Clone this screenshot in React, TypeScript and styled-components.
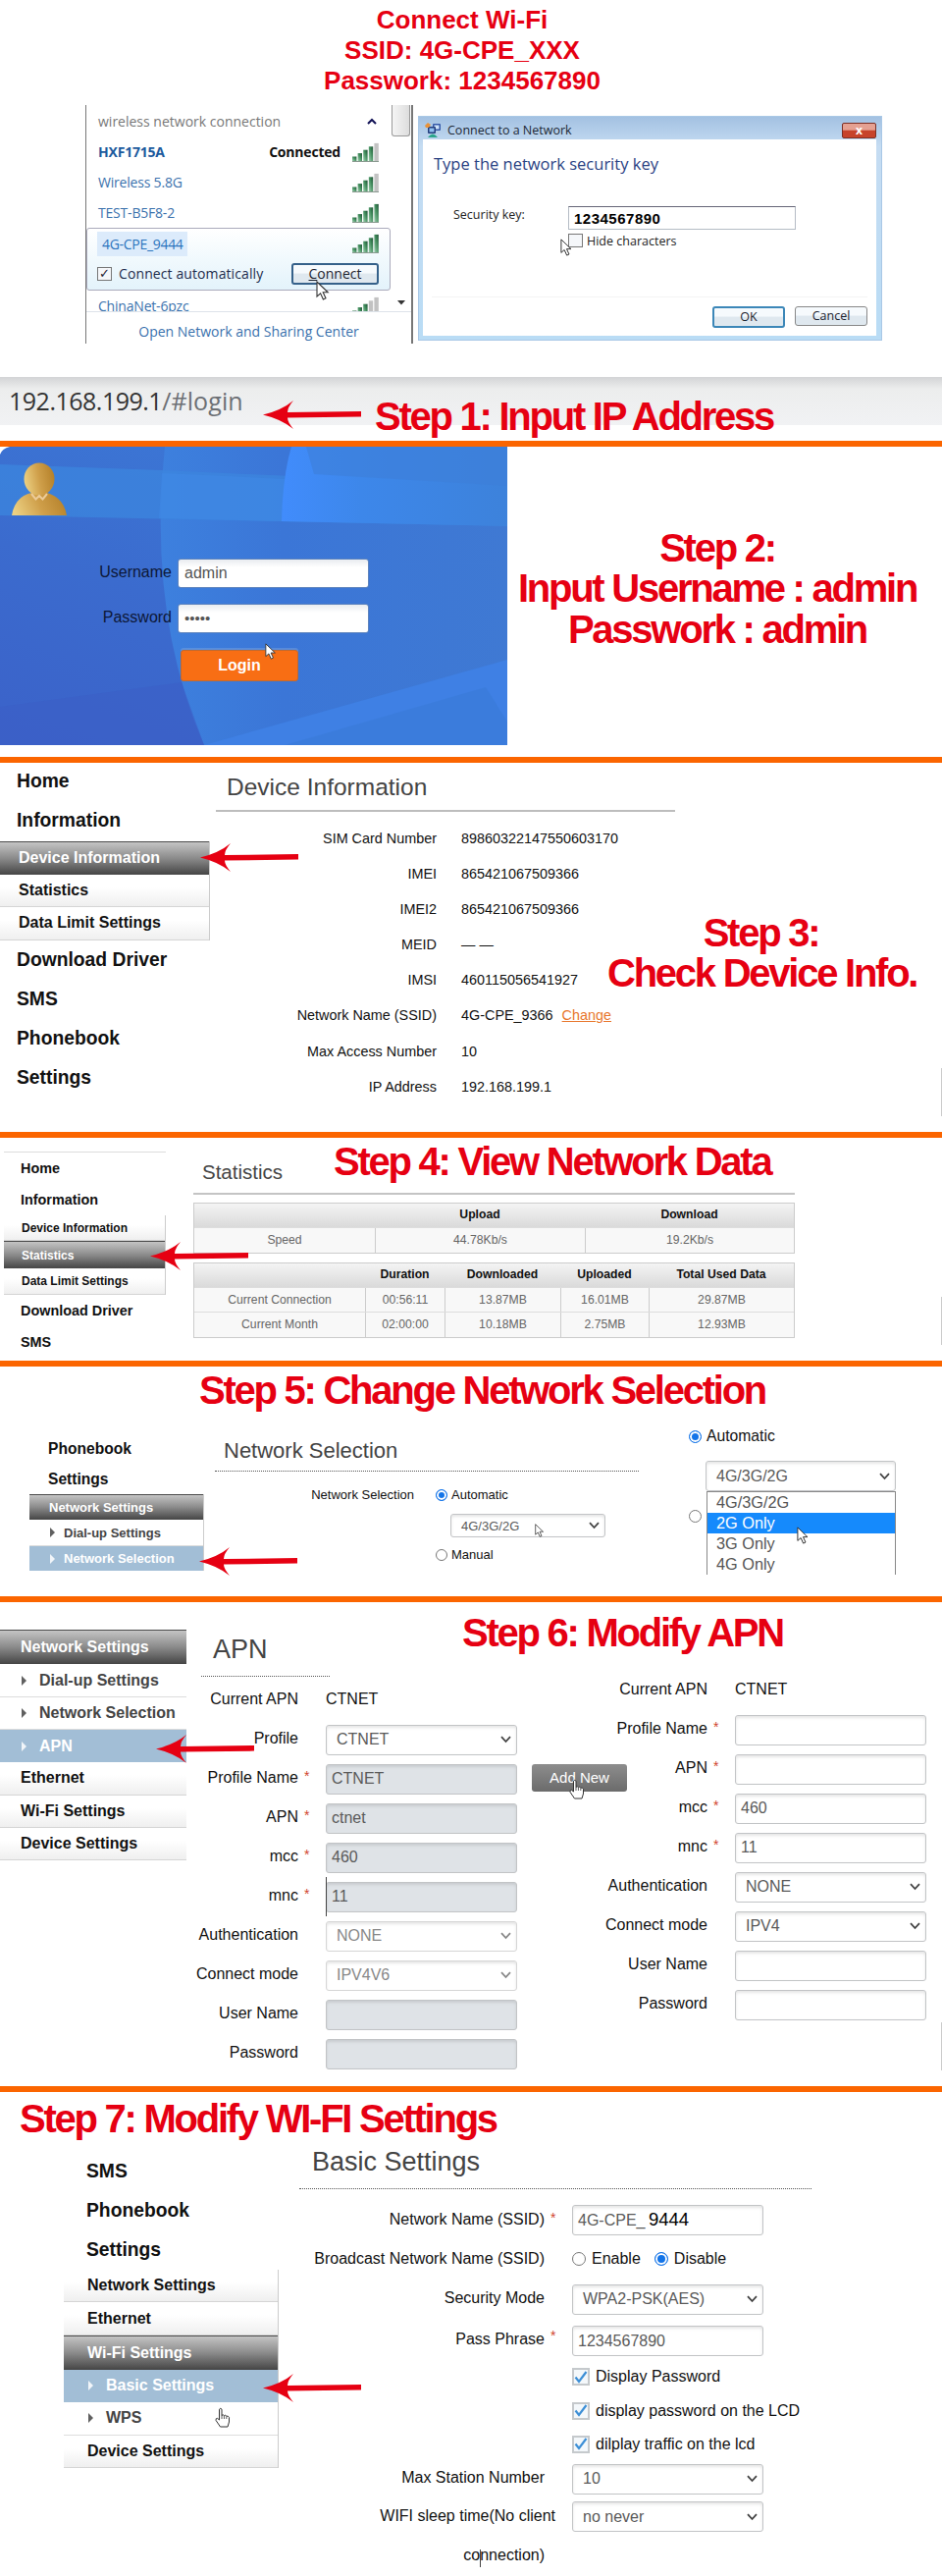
import React from 'react';
import styled, { createGlobalStyle, css } from 'styled-components';

const ORANGE = '#fb6500';
const RED = '#e60012';

const GlobalStyle = createGlobalStyle`
    * {
        box-sizing: border-box;
    }

    body {
        margin: 0;
        background: #fff;
        font-family: 'Liberation Sans', Arial, sans-serif;
        color: #111;
    }
`;

/* ---------- page scaffolding ---------- */

const Page = styled.main`
    width: 960px;
    height: 2624px;
    overflow: hidden;
`;

const Section = styled.section<{ $height: number; $last?: boolean }>`
    position: relative;
    height: ${props => props.$height}px;
    border-bottom: ${props => (props.$last ? 'none' : `6px solid ${ORANGE}`)};
`;

const Columns = styled.div`
    display: flex;
    align-items: flex-start;
`;

const StepTitle = styled.h2<{ $left?: number; $top?: number; $width?: number }>`
    margin: ${props => props.$top || 0}px 0 0 ${props => props.$left || 0}px;
    width: ${props => (props.$width ? `${props.$width}px` : 'auto')};
    flex-shrink: 0;
    font-size: 40px;
    line-height: ${props => (props.$width ? 41.4 : 48)}px;
    letter-spacing: -2.25px;
    text-align: ${props => (props.$width ? 'center' : 'left')};
    white-space: nowrap;
    color: ${RED};
`;

const Overlay = styled.div<{ $x: number; $y: number }>`
    position: absolute;
    left: ${props => props.$x}px;
    top: ${props => props.$y}px;
    z-index: 2;
    line-height: 0;
`;

const EdgeMark = styled.div<{ $y: number }>`
    position: absolute;
    right: 0;
    top: ${props => props.$y}px;
    width: 1px;
    height: 49px;
    background: #ccc;
`;

const TextCaret = styled.div<{ $h: number }>`
    width: 1px;
    height: ${props => props.$h}px;
    background: #444;
`;

/* ---------- drawings ---------- */

const Arrow = () => (
    <svg width="100" height="29" viewBox="0 0 100 29">
        <path
            d="M0 14.5 Q19 10 31 0 Q25 7 25 12 L100 11 V16.6 L25 17.6 Q25 22 31 29 Q19 19 0 14.5Z"
            fill={RED}
        />
    </svg>
);

const Pointer = ({ size = 18 }: { size?: number }) => (
    <svg width={size * 0.7} height={size} viewBox="0 0 14 20">
        <path
            d="M1 1 V16 L4.6 12.8 L7.4 19 L10 17.8 L7.2 11.8 H12.2 Z"
            fill="#fff"
            stroke="#333"
            strokeWidth="1.1"
        />
    </svg>
);

const Hand = () => (
    <svg width="16" height="21" viewBox="0 0 16 21">
        <path
            d="M4.5 13 V2.2 Q5.7 .4 7 2.2 V8.3 Q8.3 7.2 9.4 8.6 Q10.8 7.6 11.8 9.2 Q13.5 8.6 14.5 10.4 V15 L13 20 H5.5 L1 13.4 Q.8 11 2.6 11.4 Z"
            fill="#fff"
            stroke="#333"
        />
        <path d="M7 8 V12 M9.4 9 V12 M11.8 9.6 V12" stroke="#333" strokeWidth=".8" />
    </svg>
);

const Chevron = ({ faded }: { faded?: boolean }) => (
    <svg width="11" height="8" viewBox="0 0 11 8">
        <path d="M1 1.2 L5.5 6 L10 1.2" fill="none" stroke={faded ? '#888' : '#444'} strokeWidth="1.8" />
    </svg>
);

const Signal = ({ level }: { level: number }) => (
    <svg width="27" height="20" viewBox="0 0 27 20">
        <defs>
            <linearGradient id="bar" x1="0" y1="1" x2="1" y2="0">
                <stop offset="0" stopColor="#9fd0b0" />
                <stop offset="0.6" stopColor="#3f8a5a" />
                <stop offset="1" stopColor="#1d4d33" />
            </linearGradient>
        </defs>
        {[0, 1, 2, 3, 4].map(i => (
            <rect
                key={i}
                x={i * 5.6}
                y={14.5 - i * 3.4}
                width="4.4"
                height={4.5 + i * 3.4}
                fill={i < level ? 'url(#bar)' : '#c2c2c2'}
            />
        ))}
        <path d="M0 19.5 H27" stroke="#8a9a90" strokeWidth="1" />
    </svg>
);

const Avatar = () => (
    <svg width="56" height="54" viewBox="0 0 56 54">
        <defs>
            <linearGradient id="gold" x1="0" y1="0.6" x2="1" y2="0.4">
                <stop offset="0" stopColor="#ecd183" />
                <stop offset="0.5" stopColor="#cf9f4a" />
                <stop offset="1" stopColor="#b5812a" />
            </linearGradient>
        </defs>
        <path d="M0 54 Q3 35 20 31 H36 Q53 36 56 54 Z" fill="url(#gold)" />
        <ellipse cx="28" cy="17" rx="15.5" ry="16.5" fill="url(#gold)" />
        <path d="M20 32 L24.5 37.5 L28 34 L31.5 37.5 L36 32" fill="none" stroke="#eccb98" strokeWidth="2" />
    </svg>
);

const LoginBackdrop = () => (
    <svg width="517" height="304" viewBox="0 0 517 304">
        <defs>
            <linearGradient id="sky" x1="0" y1="1" x2="0.6" y2="0">
                <stop offset="0" stopColor="#3b62c9" />
                <stop offset="0.5" stopColor="#3b6bce" />
                <stop offset="1" stopColor="#3c78d6" />
            </linearGradient>
            <linearGradient id="beam" x1="0" y1="0" x2="1" y2="0">
                <stop offset="0" stopColor="#418cfc" />
                <stop offset="0.35" stopColor="#3d87ea" />
                <stop offset="1" stopColor="#3d82db" />
            </linearGradient>
            <linearGradient id="sweep" x1="0" y1="0" x2="1" y2="0">
                <stop offset="0" stopColor="#3d80de" />
                <stop offset="0.35" stopColor="#3b76d7" />
                <stop offset="1" stopColor="#3f79d3" />
            </linearGradient>
        </defs>
        <rect width="517" height="304" fill="url(#sky)" />
        <path d="M168 0 Q150 170 208 304 H517 V0Z" fill="url(#sweep)" />
        <path d="M0 18 L165 24 L517 40 V81 L0 70Z" fill="#3c86de" opacity="0.75" />
        <path d="M165 27 L290 33 L287 76 L162 73Z" fill="#3f88e6" opacity="0.6" />
        <path d="M297 0 H517 V81 L287 76 Q288 30 297 0Z" fill="url(#beam)" />
        <path d="M320 28 L517 40 V0 H312Z" fill="#3e7fd8" opacity="0.6" />
        <path d="M208 304 L517 217 V304Z" fill="#3f80e4" />
        <path d="M290 304 L495 245 L517 280 V304Z" fill="#3b7ad8" opacity="0.7" />
        <path d="M0 265 L185 240 L208 304 H0Z" fill="#3b5ec6" opacity="0.5" />
        <path d="M0 0 H10 Q2 2 0 8Z" fill="#fff" />
    </svg>
);

/* ---------- Windows network flyout ---------- */

const Intro = styled.header`
    height: 384px;
    padding-top: 5px;
`;

const IntroTitle = styled.h1`
    width: 942px;
    margin: 0 0 9px;
    font-size: 26px;
    line-height: 31px;
    text-align: center;
    color: ${RED};
`;

const Flyout = styled.div`
    display: flex;
    flex-wrap: wrap;
    width: 334px;
    height: 243px;
    margin-left: 87px;
    border-left: 1px solid #777;
    border-right: 2px solid #777;
    font-family: 'Open Sans', sans-serif;
    font-size: 14px;
    color: #3b72ad;
`;

const NetworkList = styled.div`
    width: 310px;
    height: 210px;
    overflow: hidden;
`;

const NetworkRow = styled.div<{ $bold?: boolean }>`
    display: flex;
    align-items: center;
    justify-content: space-between;
    height: 31px;
    padding: 0 12px;
    font-weight: ${props => (props.$bold ? 700 : 400)};
    letter-spacing: -0.2px;
    color: ${props => (props.$bold ? '#1c5a9d' : '#3b72ad')};
    white-space: nowrap;
`;

const ListHeader = styled(NetworkRow)`
    height: 32px;
    padding-right: 14px;
    color: #777;
    letter-spacing: 0;
`;

const Connected = styled.span`
    margin: 0 12px 0 auto;
    color: #111;
`;

const SelectedNetwork = styled.div`
    height: 64px;
    border: 1px solid #aab;
    border-radius: 3px;
    background: linear-gradient(#fff, #e3f3fb);
    color: #1d2d4d;
`;

const SelectedRow = styled.div`
    display: flex;
    align-items: center;
    justify-content: space-between;
    height: 30.5px;
    padding: 0 11px 0 10px;
`;

const Highlight = styled.span`
    height: 25px;
    padding: 0 4px 0 5px;
    line-height: 26px;
    background: #dcebfb;
    color: #2a73bd;
    letter-spacing: -0.3px;
`;

const AutoLabel = styled.span`
    margin: 0 auto 0 7px;
    letter-spacing: 0.1px;
`;

const WinCheck = styled.span`
    width: 15px;
    height: 14px;
    border: 1px solid #777;
    background: #f5f7fa;
    font: 700 13px/12px 'DejaVu Sans', sans-serif;
    text-align: center;
    color: #223;
`;

const WinButton = styled.span<{ $width: number; $accent?: boolean; $blue?: boolean }>`
    width: ${props => props.$width}px;
    height: ${props => (props.$accent ? 22 : 20)}px;
    border: ${props => (props.$accent ? '2px solid #35618a' : '1px solid #888')};
    border-color: ${props => (props.$blue ? '#3c87b8' : undefined)};
    border-radius: 3px;
    background: linear-gradient(#f6fafd 45%, #dfe8ef 50%);
    line-height: 18px;
    text-align: center;
    color: #1d2430;
`;

const Scrollbar = styled.div`
    display: flex;
    flex-direction: column;
    justify-content: space-between;
    align-items: center;
    width: 21px;
    height: 204px;
`;

const Thumb = styled.div`
    width: 19px;
    height: 32px;
    border: 1px solid #999;
    border-top: none;
    border-radius: 0 0 3px 3px;
    background: linear-gradient(90deg, #f5f5f5, #ddd);
`;

const FlyoutFooter = styled.div`
    width: 331px;
    height: 33px;
    padding-top: 9px;
    border-top: 1px solid #dde3ea;
    line-height: 22px;
    text-align: center;
    color: #3a71ad;
`;

/* ---------- "Connect to a Network" dialog ---------- */

const Dialog = styled.div`
    width: 473px;
    height: 229px;
    margin: 11px 0 0 5px;
    padding: 0 5px 5px 4px;
    border: 1px solid #a9c8e6;
    background: linear-gradient(#a3c1e2, #c5dcf2 30px, #b9dcf5);
    font-family: 'Open Sans', sans-serif;
    font-size: 12.5px;
    color: #222;
`;

const DialogBar = styled.div`
    display: flex;
    align-items: center;
    gap: 6px;
    height: 23px;
    padding: 4px 0 0 2px;
    color: #1c2836;
`;

const CloseButton = styled.span`
    width: 35px;
    height: 16px;
    margin-left: auto;
    border: 1px solid #7c2f24;
    border-radius: 2px;
    background: linear-gradient(#e5a192 45%, #c7432b 50%);
    font-size: 12px;
    font-weight: 700;
    line-height: 13px;
    text-align: center;
    color: #fff;
`;

const DialogBody = styled.div`
    height: 200px;
    padding: 13px 11px 0 11px;
    background: #fff;
`;

const DialogHeading = styled.div`
    height: 24px;
    margin-bottom: 31px;
    font-size: 16.5px;
    line-height: 24px;
    color: #2a4283;
`;

const KeyRow = styled.div`
    display: flex;
    padding-left: 20px;
    line-height: 16px;
`;

const KeyLabel = styled.span`
    width: 117px;
    padding-top: 1px;
`;

const KeyInput = styled.div`
    width: 232px;
    height: 24px;
    padding-left: 5px;
    border: 1px solid #b5bcc5;
    border-top-color: #667;
    font: 700 15px/23px 'Liberation Sans', Arial, sans-serif;
    letter-spacing: 0.5px;
    color: #000;
`;

const HideRow = styled.div`
    display: flex;
    align-items: center;
    gap: 4px;
    height: 16px;
    margin: 3px 0 49px 137px;
`;

const DialogActions = styled.div`
    display: flex;
    justify-content: flex-end;
    gap: 10px;
    margin: 0 -2px;
    padding-top: 9px;
    border-top: 1px solid #f3f3f3;
`;

/* ---------- step 1 ---------- */

const AddressBar = styled.div`
    display: flex;
    align-items: flex-start;
    height: 59px;
    padding-left: 9px;
    background: linear-gradient(#d3d4d6, #eceded 12px, #f1f2f4) no-repeat 0 0 / 100% 49px;
`;

const Url = styled.div`
    width: 259px;
    font-family: 'Open Sans', sans-serif;
    font-size: 25px;
    line-height: 48px;
    letter-spacing: -0.5px;
    color: #333;

    span {
        letter-spacing: 0.1px;
        color: #6d7075;
    }
`;

const ArrowSlot = styled.div`
    width: 114px;
    padding-top: 24px;
`;

/* ---------- step 2 ---------- */

const LoginPanel = styled.div`
    position: relative;
    width: 517px;
    height: 304px;
    padding-top: 114px;
    font-size: 16px;
`;

const Backdrop = styled.div`
    position: absolute;
    inset: 0;
    z-index: -1;
    line-height: 0;
`;

const LoginRow = styled.div`
    display: flex;
    align-items: center;
    height: 30px;
    margin-bottom: 16px;
    color: #0d1838;
`;

const LoginLabel = styled.label`
    width: 181px;
    padding: 0 6px 2px 0;
    text-align: right;
`;

const LoginInput = styled.div`
    width: 195px;
    height: 30px;
    padding-left: 6px;
    border: 1px solid #5d83bd;
    border-radius: 3px;
    background: linear-gradient(#e9ecf0, #fff 8px);
    line-height: 28px;
    color: #555;
`;

const Dots = styled.span`
    font-size: 15px;
`;

const LoginButton = styled.div`
    width: 120px;
    height: 32px;
    margin: 17px 0 0 184px;
    border: 1px solid #c1692f;
    border-radius: 3px;
    background: #f86e14;
    box-shadow: 0 -2px 0 rgba(130, 170, 225, 0.4);
    font-weight: 700;
    line-height: 29px;
    text-align: center;
    color: #fff;
`;

/* ---------- router side menu ---------- */

const SideNav = styled.nav<{ $left?: number; $top?: number; $width: number; $ruled?: boolean }>`
    flex-shrink: 0;
    width: ${props => props.$width}px;
    margin: ${props => props.$top || 0}px 0 0 ${props => props.$left || 0}px;
    border-top: ${props => (props.$ruled ? '1px solid #ddd' : 'none')};
`;

const NavItem = styled.div<{ $h: number; $indent: number; $size: number }>`
    height: ${props => props.$h}px;
    padding-left: ${props => props.$indent}px;
    font-size: ${props => props.$size}px;
    font-weight: 700;
    line-height: ${props => props.$h}px;
    color: #111;
`;

const SubMenu = styled.div<{ $size: number; $open?: boolean }>`
    border-right: ${props => (props.$open ? 'none' : '1px solid #ccc')};
    font-size: ${props => props.$size}px;
    font-weight: 700;
`;

type SubKind = 'plain' | 'active' | 'child' | 'childActive';

const kindStyles = {
    plain: css`
        background: linear-gradient(#fff 40%, #efefef);
        border-bottom: 1px solid #d5d5d5;
        color: #111;
    `,
    active: css`
        background: linear-gradient(#c4c4c4, #8a8a8a 50%, #454545);
        border-top: 1px solid #4c4c4c;
        color: #fff;
    `,
    child: css`
        background: #fff;
        border-bottom: 1px solid #ddd;
        color: #444;
    `,
    childActive: css`
        background: #a2bed6;
        color: #fff;
    `,
};

const SubItem = styled.div<{ $kind: SubKind; $h: number; $indent: number }>`
    display: flex;
    align-items: center;
    height: ${props => props.$h}px;
    padding-left: ${props => props.$indent}px;
    white-space: nowrap;
    ${props => kindStyles[props.$kind]}
`;

const Caret = styled.i<{ $gap: number }>`
    margin: 0 ${props => props.$gap}px 0 1px;
    border: 5px solid transparent;
    border-left: 5px solid currentColor;
    border-right: none;
    opacity: 0.85;
`;

interface MenuEntry {
    label: string;
    kind?: SubKind;
    h: number;
}

interface MenuProps {
    items: MenuEntry[];
    size: number;
    indent: number;
    open?: boolean;
    gap?: number;
}

const Menu: React.FC<MenuProps> = ({ items, size, indent, open, gap = 13 }) => (
    <SubMenu $size={size} $open={open}>
        {items.map(({ label, kind = 'plain', h }) => (
            <SubItem key={label} $kind={kind} $h={h} $indent={indent}>
                {kind.startsWith('child') && <Caret $gap={gap} />}
                {label}
            </SubItem>
        ))}
    </SubMenu>
);

/* ---------- router content ---------- */

const PageTitle = styled.h3<{ $size: number; $h: number; $line: number; $pad: number; $width: number; $rule?: string }>`
    width: ${props => props.$width}px;
    height: ${props => props.$h}px;
    margin: 0;
    padding-left: ${props => props.$pad}px;
    border-bottom: ${props => props.$rule || '1px dotted #555'};
    font-size: ${props => props.$size}px;
    font-weight: 400;
    line-height: ${props => props.$line}px;
    color: #444;
`;

const Content = styled.div<{ $left?: number; $top?: number }>`
    margin: ${props => props.$top || 0}px 0 0 ${props => props.$left || 0}px;
`;

const InfoList = styled.dl`
    width: 399px;
    margin: 9px 0 0;
    font-size: 14.4px;
`;

const InfoRow = styled.div`
    display: grid;
    grid-template-columns: 225px 1fr;
    column-gap: 25px;
    height: 36.1px;
    line-height: 36px;
    white-space: nowrap;

    dt {
        text-align: right;
    }

    dd {
        margin: 0;
    }
`;

const ChangeLink = styled.a`
    margin-left: 9px;
    color: #e8762c;
    text-decoration: underline;
`;

const Table = styled.div<{ $top: number }>`
    width: 613px;
    margin-top: ${props => props.$top}px;
    border: 1px solid #ccc;
    background: #f8f8f8;
    font-size: 12.2px;
    color: #666;
`;

const TableRow = styled.div<{ $cols: string; $head?: boolean }>`
    display: grid;
    grid-template-columns: ${props => props.$cols};
    height: ${props => (props.$head ? 24 : 25.5)}px;
    line-height: ${props => (props.$head ? 22 : 24)}px;
    text-align: center;

    ${props =>
        props.$head
            ? css`
                  background: linear-gradient(#f4f4f4, #dadada);
                  font-weight: 700;
                  color: #111;
              `
            : css`
                  & + & {
                      border-top: 1px solid #ddd;
                  }

                  span + span {
                      border-left: 1px solid #ccc;
                  }
              `}
`;

const HeadRow = styled.div<{ $rule?: boolean }>`
    display: flex;
    align-items: flex-start;
    ${props =>
        props.$rule &&
        css`
            width: 613px;
            border-bottom: 2px solid #c4c4c4;
        `}
`;

const FormRow = styled.div<{ $h?: number; $label: number }>`
    display: grid;
    grid-template-columns: ${props => props.$label}px 28px auto;
    align-items: center;
    justify-content: start;
    height: ${props => props.$h || 40}px;
    font-size: 16px;
    white-space: nowrap;
`;

const Label = styled.label<{ $spill?: boolean }>`
    margin-right: ${props => (props.$spill ? -11 : 0)}px;
    text-align: right;
`;

const Star = styled.sup`
    align-self: start;
    padding: 10px 0 0 6px;
    font-size: 14px;
    line-height: 16px;
    color: #d0442c;
`;

interface FieldProps {
    $disabled?: boolean;
    $select?: boolean;
    $faded?: boolean;
    $w?: number;
    $h?: number;
    $shift?: number;
}

const Field = styled.div<FieldProps>`
    display: flex;
    align-items: center;
    justify-content: space-between;
    width: ${props => props.$w || 195}px;
    height: ${props => props.$h || 31}px;
    margin-top: ${props => (props.$shift === undefined ? 2 : props.$shift)}px;
    padding: 0 ${props => (props.$select ? '5px 0 10px' : '5px')};
    border: 1px solid ${props => (props.$faded ? '#d6d6d6' : '#c2c4c6')};
    border-radius: 3px;
    background: ${props => (props.$disabled ? '#dfe3e7' : '#fff')};
    box-shadow: inset 0 2px 3px rgba(0, 0, 0, 0.1);
    color: ${props => (props.$faded ? '#888' : '#5a5a5a')};
    white-space: pre;
`;

const NewSsid = styled.b`
    margin-left: -1px;
    font-size: 18.5px;
    font-weight: 400;
    line-height: 18px;
    color: #000;
`;

const Radio = styled.i<{ $on?: boolean; $size?: number }>`
    flex-shrink: 0;
    width: ${props => props.$size || 13}px;
    height: ${props => props.$size || 13}px;
    border: 1px solid ${props => (props.$on ? '#1374e8' : '#777')};
    border-radius: 50%;
    background: ${props => (props.$on ? '#1374e8' : '#fff')};
    box-shadow: inset 0 0 0 2px #fff;
`;

const Choice = styled.span<{ $size?: number; $gap?: number; $h?: number }>`
    display: inline-flex;
    align-items: center;
    gap: ${props => props.$gap || 5}px;
    height: ${props => props.$h || 24}px;
    margin-right: 14px;
    font-size: ${props => props.$size || 16}px;
`;

const CheckBox = styled.i`
    display: flex;
    align-items: center;
    justify-content: center;
    width: 18px;
    height: 18px;
    border: 2px solid #c5c9cc;
    background: #f4f8fb;
`;

const Check: React.FC<{ label: string }> = ({ label }) => (
    <FormRow $label={250} $h={34.4}>
        <span />
        <span />
        <Choice $gap={6}>
            <CheckBox>
                <svg width="14" height="13" viewBox="0 0 14 13">
                    <path d="M1.5 6.5 L5 11 L12.5 1" fill="none" stroke="#3d8fd6" strokeWidth="2.2" />
                </svg>
            </CheckBox>
            {label}
        </Choice>
    </FormRow>
);

const AddNew = styled.div`
    width: 97px;
    height: 28px;
    margin: 89px 0 0 15px;
    border-radius: 3px;
    background: linear-gradient(#8d8d8d, #6b6b6b);
    font-size: 15px;
    line-height: 27px;
    text-align: center;
    color: #fff;
`;

const NetChoice = styled.div`
    display: grid;
    grid-template-columns: 203px auto;
    column-gap: 22px;
    margin-top: 8px;
    font-size: 13px;
    line-height: 31px;
    text-align: right;

    > div {
        display: flex;
        flex-direction: column;
        text-align: left;
    }
`;

const DropRow = styled.div`
    display: flex;
    align-items: flex-start;

    > i {
        margin-top: 19px;
    }
`;

const DropList = styled.div`
    width: 193px;
    height: 85px;
    margin-left: 5px;
    border: 1px solid #888;
    border-bottom: none;
    overflow: hidden;
`;

const Option = styled.div<{ $on?: boolean }>`
    height: 20.9px;
    padding-left: 9px;
    background: ${props => (props.$on ? '#158afc' : '#fff')};
    font-size: 16.3px;
    line-height: 20px;
    color: ${props => (props.$on ? '#fff' : '#555')};
`;

interface FormEntry {
    label: string;
    value?: string;
    text?: boolean;
    required?: boolean;
    select?: boolean;
    disabled?: boolean;
    faded?: boolean;
}

const Form: React.FC<{ rows: FormEntry[]; label: number }> = ({ rows, label }) => (
    <>
        {rows.map(row => (
            <FormRow key={row.label} $label={label}>
                <Label>{row.label}</Label>
                {row.required ? <Star>*</Star> : <span />}
                {row.text ? (
                    <span>{row.value}</span>
                ) : (
                    <Field $select={row.select} $disabled={row.disabled} $faded={row.faded}>
                        {row.value || ''}
                        {row.select && <Chevron faded={row.faded} />}
                    </Field>
                )}
            </FormRow>
        ))}
    </>
);

/* ---------- data ---------- */

const deviceInfo = [
    ['SIM Card Number', '89860322147550603170'],
    ['IMEI', '865421067509366'],
    ['IMEI2', '865421067509366'],
    ['MEID', '— —'],
    ['IMSI', '460115056541927'],
    ['Network Name (SSID)', '4G-CPE_9366'],
    ['Max Access Number', '10'],
    ['IP Address', '192.168.199.1'],
];

const currentApn: FormEntry[] = [
    { label: 'Current APN', value: 'CTNET', text: true },
    { label: 'Profile', value: 'CTNET', select: true },
    { label: 'Profile Name', value: 'CTNET', required: true, disabled: true },
    { label: 'APN', value: 'ctnet', required: true, disabled: true },
    { label: 'mcc', value: '460', required: true, disabled: true },
    { label: 'mnc', value: '11', required: true, disabled: true },
    { label: 'Authentication', value: 'NONE', select: true, faded: true },
    { label: 'Connect mode', value: 'IPV4V6', select: true, faded: true },
    { label: 'User Name', disabled: true },
    { label: 'Password', disabled: true },
];

const newApn: FormEntry[] = [
    { label: 'Current APN', value: 'CTNET', text: true },
    { label: 'Profile Name', required: true },
    { label: 'APN', required: true },
    { label: 'mcc', value: '460', required: true },
    { label: 'mnc', value: '11', required: true },
    { label: 'Authentication', value: 'NONE', select: true },
    { label: 'Connect mode', value: 'IPV4', select: true },
    { label: 'User Name' },
    { label: 'Password' },
];

const speedCols = '184px 214px 1fr';
const usageCols = '174px 81px 118px 90px 1fr';

const App: React.FC = () => (
    <Page>
        <GlobalStyle />

        <Intro>
            <IntroTitle>
                Connect Wi-Fi
                <br />
                SSID: 4G-CPE_XXX
                <br />
                Passwork: 1234567890
            </IntroTitle>
            <Columns>
                <Flyout>
                    <NetworkList>
                        <ListHeader>
                            wireless network connection
                            <svg width="10" height="7" viewBox="0 0 10 7">
                                <path d="M1 6 L5 2 L9 6" fill="none" stroke="#115" strokeWidth="2" />
                            </svg>
                        </ListHeader>
                        <NetworkRow $bold>
                            HXF1715A
                            <Connected>Connected</Connected>
                            <Signal level={4} />
                        </NetworkRow>
                        <NetworkRow>
                            Wireless 5.8G
                            <Signal level={4} />
                        </NetworkRow>
                        <NetworkRow>
                            TEST-B5F8-2
                            <Signal level={5} />
                        </NetworkRow>
                        <SelectedNetwork>
                            <SelectedRow>
                                <Highlight>4G-CPE_9444</Highlight>
                                <Signal level={5} />
                            </SelectedRow>
                            <SelectedRow>
                                <WinCheck>✓</WinCheck>
                                <AutoLabel>Connect automatically</AutoLabel>
                                <WinButton $width={89} $accent>
                                    <u>C</u>onnect
                                </WinButton>
                            </SelectedRow>
                        </SelectedNetwork>
                        <NetworkRow>
                            ChinaNet-6pzc
                            <Signal level={3} />
                        </NetworkRow>
                    </NetworkList>
                    <Scrollbar>
                        <Thumb />
                        <svg width="8" height="5" viewBox="0 0 8 5">
                            <path d="M0 0 H8 L4 4.5Z" fill="#333" />
                        </svg>
                    </Scrollbar>
                    <FlyoutFooter>Open Network and Sharing Center</FlyoutFooter>
                </Flyout>

                <Dialog>
                    <DialogBar>
                        <svg width="17" height="15" viewBox="0 0 17 15">
                            <rect x="8" y="1" width="8" height="7" rx="1" fill="#3558a8" />
                            <rect x="9.5" y="2.5" width="5" height="4" fill="#cfe4fa" />
                            <rect x="3" y="4" width="8" height="7" rx="1" fill="#223c7c" />
                            <rect x="4.5" y="5.5" width="5" height="4" fill="#8fc0f0" />
                            <path d="M0 3 L3 0 L6 2 L4 5 L1 5Z" fill="#e8923a" />
                            <path d="M3 15 Q8 8 13 15Z" fill="#2ba58c" />
                        </svg>
                        Connect to a Network
                        <CloseButton>x</CloseButton>
                    </DialogBar>
                    <DialogBody>
                        <DialogHeading>Type the network security key</DialogHeading>
                        <KeyRow>
                            <KeyLabel>Security key:</KeyLabel>
                            <KeyInput>1234567890</KeyInput>
                        </KeyRow>
                        <HideRow>
                            <WinCheck />
                            Hide characters
                        </HideRow>
                        <DialogActions>
                            <WinButton $width={74} $accent $blue>
                                OK
                            </WinButton>
                            <WinButton $width={74}>Cancel</WinButton>
                        </DialogActions>
                    </DialogBody>
                </Dialog>
            </Columns>
            <Overlay $x={322} $y={286}>
                <Pointer size={20} />
            </Overlay>
            <Overlay $x={571} $y={243}>
                <Pointer />
            </Overlay>
        </Intro>

        <Section $height={71}>
            <AddressBar>
                <Url>
                    192.168.199.1<span>/#login</span>
                </Url>
                <ArrowSlot>
                    <Arrow />
                </ArrowSlot>
                <StepTitle $top={16}>Step 1: Input IP Address</StepTitle>
            </AddressBar>
        </Section>

        <Section $height={322}>
            <Columns>
                <LoginPanel>
                    <Backdrop>
                        <LoginBackdrop />
                    </Backdrop>
                    <Overlay $x={12} $y={16}>
                        <Avatar />
                    </Overlay>
                    <LoginRow>
                        <LoginLabel>Username</LoginLabel>
                        <LoginInput>admin</LoginInput>
                    </LoginRow>
                    <LoginRow>
                        <LoginLabel>Password</LoginLabel>
                        <LoginInput>
                            <Dots>•••••</Dots>
                        </LoginInput>
                    </LoginRow>
                    <LoginButton>Login</LoginButton>
                    <Overlay $x={270} $y={200}>
                        <Pointer size={17} />
                    </Overlay>
                </LoginPanel>
                <StepTitle $top={83} $width={428}>
                    Step 2:
                    <br />
                    Input Username : admin
                    <br />
                    Passwork : admin
                </StepTitle>
            </Columns>
        </Section>

        <Section $height={382}>
            <Columns>
                <SideNav $width={214} $top={-1}>
                    <NavItem $h={40.3} $indent={17} $size={19.3}>Home</NavItem>
                    <NavItem $h={40.3} $indent={17} $size={19.3}>Information</NavItem>
                    <Menu
                        size={16}
                        indent={19}
                        items={[
                            { label: 'Device Information', kind: 'active', h: 34 },
                            { label: 'Statistics', h: 33.5 },
                            { label: 'Data Limit Settings', h: 33.5 },
                        ]}
                    />
                    {['Download Driver', 'SMS', 'Phonebook', 'Settings'].map(name => (
                        <NavItem key={name} $h={40.1} $indent={17} $size={19.3}>
                            {name}
                        </NavItem>
                    ))}
                </SideNav>
                <Content $left={6}>
                    <PageTitle $size={24.5} $h={50} $line={49} $pad={11} $width={468} $rule="2px solid #bdbdbd">
                        Device Information
                    </PageTitle>
                    <Columns>
                        <InfoList>
                            {deviceInfo.map(([name, value]) => (
                                <InfoRow key={name}>
                                    <dt>{name}</dt>
                                    <dd>
                                        {value}
                                        {value === '4G-CPE_9366' && <ChangeLink>Change</ChangeLink>}
                                    </dd>
                                </InfoRow>
                            ))}
                        </InfoList>
                        <StepTitle $top={103} $width={313}>
                            Step 3:
                            <br />
                            Check Device Info.
                        </StepTitle>
                    </Columns>
                </Content>
            </Columns>
            <Overlay $x={204} $y={82}>
                <Arrow />
            </Overlay>
            <EdgeMark $y={311} />
        </Section>

        <Section $height={233}>
            <Columns>
                <SideNav $left={4} $top={14} $width={165} $ruled>
                    <NavItem $h={32} $indent={17} $size={14.4}>Home</NavItem>
                    <NavItem $h={32} $indent={17} $size={14.4}>Information</NavItem>
                    <Menu
                        size={12}
                        indent={18}
                        items={[
                            { label: 'Device Information', h: 26 },
                            { label: 'Statistics', kind: 'active', h: 28 },
                            { label: 'Data Limit Settings', h: 27 },
                        ]}
                    />
                    <NavItem $h={32} $indent={17} $size={14.4}>Download Driver</NavItem>
                    <NavItem $h={32} $indent={17} $size={14.4}>SMS</NavItem>
                </SideNav>
                <Content $left={28}>
                    <HeadRow $rule>
                        <Content $top={17}>
                            <PageTitle $size={20.5} $h={39} $line={36} $pad={9} $width={143} $rule="none">
                                Statistics
                            </PageTitle>
                        </Content>
                        <StepTitle>Step 4: View Network Data</StepTitle>
                    </HeadRow>
                    <Table $top={8}>
                        <TableRow $cols={speedCols} $head>
                            <span />
                            <span>Upload</span>
                            <span>Download</span>
                        </TableRow>
                        <TableRow $cols={speedCols}>
                            <span>Speed</span>
                            <span>44.78Kb/s</span>
                            <span>19.2Kb/s</span>
                        </TableRow>
                    </Table>
                    <Table $top={9}>
                        <TableRow $cols={usageCols} $head>
                            <span />
                            <span>Duration</span>
                            <span>Downloaded</span>
                            <span>Uploaded</span>
                            <span>Total Used Data</span>
                        </TableRow>
                        <TableRow $cols={usageCols}>
                            <span>Current Connection</span>
                            <span>00:56:11</span>
                            <span>13.87MB</span>
                            <span>16.01MB</span>
                            <span>29.87MB</span>
                        </TableRow>
                        <TableRow $cols={usageCols}>
                            <span>Current Month</span>
                            <span>02:00:00</span>
                            <span>10.18MB</span>
                            <span>2.75MB</span>
                            <span>12.93MB</span>
                        </TableRow>
                    </Table>
                </Content>
            </Columns>
            <Overlay $x={153} $y={106}>
                <Arrow />
            </Overlay>
            <EdgeMark $y={162} />
        </Section>

        <Section $height={240}>
            <StepTitle $left={203}>Step 5: Change Network Selection</StepTitle>
            <Columns>
                <SideNav $left={30} $top={20} $width={178}>
                    <NavItem $h={31} $indent={19} $size={15.6}>Phonebook</NavItem>
                    <NavItem $h={31} $indent={19} $size={15.6}>Settings</NavItem>
                    <Menu
                        size={13}
                        indent={20}
                        gap={9}
                        items={[
                            { label: 'Network Settings', kind: 'active', h: 26 },
                            { label: 'Dial-up Settings', kind: 'child', h: 27 },
                            { label: 'Network Selection', kind: 'childActive', h: 25 },
                        ]}
                    />
                </SideNav>
                <Content $left={11} $top={19}>
                    <PageTitle $size={22} $h={40} $line={38} $pad={9} $width={432}>
                        Network Selection
                    </PageTitle>
                    <NetChoice>
                        Network Selection
                        <div>
                            <Choice $size={13} $gap={4} $h={31}>
                                <Radio $on $size={12} />
                                Automatic
                            </Choice>
                            <Content $left={15} $top={4}>
                                <Field $select $w={158} $h={24} $shift={0}>
                                    4G/3G/2G
                                    <Chevron />
                                </Field>
                            </Content>
                            <Choice $size={13} $gap={4} $h={35}>
                                <Radio $size={12} />
                                Manual
                            </Choice>
                        </div>
                    </NetChoice>
                </Content>
                <Content $left={51} $top={11}>
                    <Choice $size={15.7}>
                        <Radio $on $size={13} />
                        Automatic
                    </Choice>
                    <Content $left={17} $top={13}>
                        <Field $select $w={194} $h={31} $shift={0}>
                            4G/3G/2G
                            <Chevron />
                        </Field>
                    </Content>
                    <DropRow>
                        <Radio $size={13} />
                        <DropList>
                            <Option>4G/3G/2G</Option>
                            <Option $on>2G Only</Option>
                            <Option>3G Only</Option>
                            <Option>4G Only</Option>
                        </DropList>
                    </DropRow>
                </Content>
            </Columns>
            <Overlay $x={203} $y={184}>
                <Arrow />
            </Overlay>
            <Overlay $x={545} $y={160}>
                <Pointer size={14} />
            </Overlay>
            <Overlay $x={812} $y={163}>
                <Pointer />
            </Overlay>
        </Section>

        <Section $height={499}>
            <Columns>
                <SideNav $top={28} $width={190}>
                    <Menu
                        size={16}
                        indent={21}
                        open
                        items={[
                            { label: 'Network Settings', kind: 'active', h: 35 },
                            { label: 'Dial-up Settings', kind: 'child', h: 34 },
                            { label: 'Network Selection', kind: 'child', h: 33 },
                            { label: 'APN', kind: 'childActive', h: 33 },
                            { label: 'Ethernet', h: 33.5 },
                            { label: 'Wi-Fi Settings', h: 33 },
                            { label: 'Device Settings', h: 33 },
                        ]}
                    />
                </SideNav>
                <div>
                    <HeadRow>
                        <Content $left={15} $top={20}>
                            <PageTitle $size={27} $h={56} $line={56} $pad={12} $width={131}>
                                APN
                            </PageTitle>
                        </Content>
                        <StepTitle $left={135} $top={7}>
                            Step 6: Modify APN
                        </StepTitle>
                    </HeadRow>
                    <Columns>
                        <Content $left={5} $top={3}>
                            <Form rows={currentApn} label={109} />
                        </Content>
                        <AddNew>Add New</AddNew>
                        <Content $left={-30} $top={-7}>
                            <Form rows={newApn} label={112} />
                        </Content>
                    </Columns>
                </div>
            </Columns>
            <Overlay $x={159} $y={135}>
                <Arrow />
            </Overlay>
            <Overlay $x={580} $y={180}>
                <Hand />
            </Overlay>
            <Overlay $x={332} $y={280}>
                <TextCaret $h={40} />
            </Overlay>
            <EdgeMark $y={428} />
        </Section>

        <Section $height={493} $last>
            <StepTitle $left={20} $top={3}>
                Step 7: Modify WI-FI Settings
            </StepTitle>
            <Columns>
                <SideNav $left={65} $top={9.5} $width={219}>
                    {['SMS', 'Phonebook', 'Settings'].map(name => (
                        <NavItem key={name} $h={40.3} $indent={23} $size={19.3}>
                            {name}
                        </NavItem>
                    ))}
                    <Menu
                        size={16}
                        indent={24}
                        items={[
                            { label: 'Network Settings', h: 33 },
                            { label: 'Ethernet', h: 33.5 },
                            { label: 'Wi-Fi Settings', kind: 'active', h: 35 },
                            { label: 'Basic Settings', kind: 'childActive', h: 33 },
                            { label: 'WPS', kind: 'child', h: 34 },
                            { label: 'Device Settings', h: 33 },
                        ]}
                    />
                </SideNav>
                <Content $left={21} $top={-5}>
                    <PageTitle $size={27} $h={53} $line={50} $pad={13} $width={522}>
                        Basic Settings
                    </PageTitle>
                    <Content $top={11}>
                        <FormRow $label={250}>
                            <Label>Network Name (SSID)</Label>
                            <Star>*</Star>
                            <Field $shift={0}>
                                <span>
                                    4G-CPE_ <NewSsid>9444</NewSsid>
                                </span>
                            </Field>
                        </FormRow>
                        <FormRow $label={250}>
                            <Label>Broadcast Network Name (SSID)</Label>
                            <span />
                            <span>
                                <Choice $gap={6}>
                                    <Radio $size={14} />
                                    Enable
                                </Choice>
                                <Choice $gap={6}>
                                    <Radio $on $size={14} />
                                    Disable
                                </Choice>
                            </span>
                        </FormRow>
                        <FormRow $label={250}>
                            <Label>Security Mode</Label>
                            <span />
                            <Field $select>
                                WPA2-PSK(AES)
                                <Chevron />
                            </Field>
                        </FormRow>
                        <FormRow $label={250} $h={43}>
                            <Label>Pass Phrase</Label>
                            <Star>*</Star>
                            <Field $shift={4}>1234567890</Field>
                        </FormRow>
                        <Check label="Display Password" />
                        <Check label="display password on the LCD" />
                        <Check label="dilplay traffic on the lcd" />
                        <FormRow $label={250} $h={34}>
                            <Label>Max Station Number</Label>
                            <span />
                            <Field $select>
                                10
                                <Chevron />
                            </Field>
                        </FormRow>
                        <FormRow $label={250} $h={43}>
                            <Label $spill>WIFI sleep time(No client</Label>
                            <span />
                            <Field $select>
                                no never
                                <Chevron />
                            </Field>
                        </FormRow>
                        <FormRow $label={250} $h={37}>
                            <Label>connection)</Label>
                        </FormRow>
                    </Content>
                </Content>
            </Columns>
            <Overlay $x={268} $y={284}>
                <Arrow />
            </Overlay>
            <Overlay $x={219} $y={318}>
                <Hand />
            </Overlay>
            <Overlay $x={489} $y={463}>
                <TextCaret $h={18} />
            </Overlay>
        </Section>
    </Page>
);

export default App;
